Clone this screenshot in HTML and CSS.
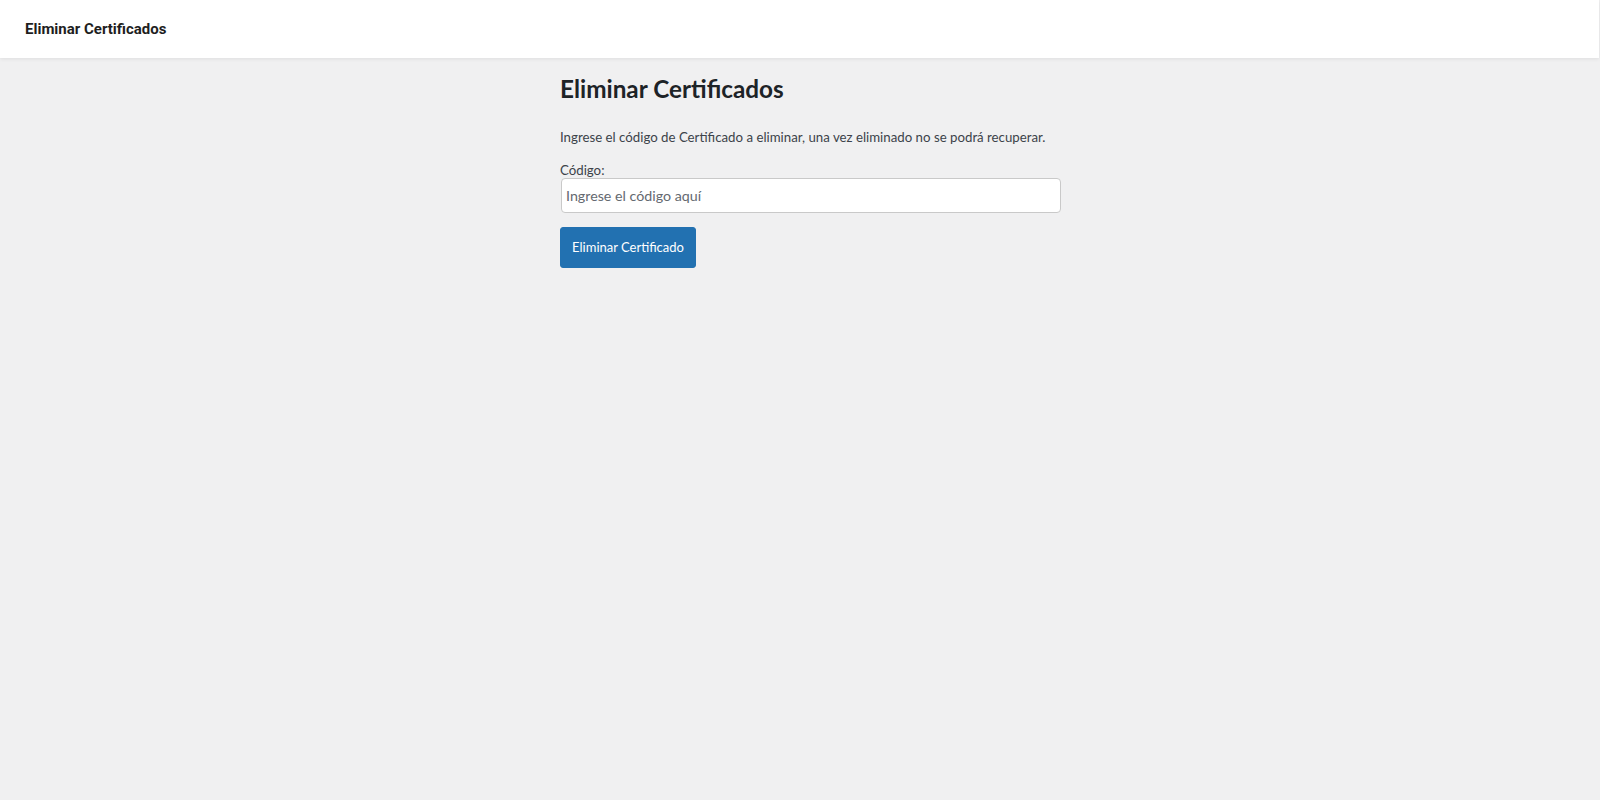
FILE: index.html
```html
<!DOCTYPE html>
<html lang="es">
<head>
<meta charset="utf-8">
<title>Eliminar Certificados</title>
<link rel="stylesheet" href="styles.css">
</head>
<body>
<header class="topbar">
  <div class="topbar-title">Eliminar Certificados</div>
</header>
<main class="wrap">
  <h1 class="page-title">Eliminar Certificados</h1>
  <p class="intro">Ingrese el código de Certificado a eliminar, una vez eliminado no se podrá recuperar.</p>
  <form class="form">
    <label class="label" for="codigo">Código:</label>
    <input class="input" id="codigo" type="text" placeholder="Ingrese el código aquí">
    <button class="button" type="button">Eliminar Certificado</button>
  </form>
</main>
</body>
</html>
```

FILE: styles.css
```css
html, body {
  margin: 0;
  padding: 0;
  background: #f0f0f1;
  height: 100%;
}
body {
  font-family: Lato, "Noto Sans", sans-serif;
  font-size: 13.25px;
  color: #3c434a;
}
.topbar {
  background: #fff;
  height: 58px;
  display: flex;
  align-items: center;
  padding-left: 25px;
  margin-right: 1px;
  box-shadow: 0 1px 4px rgba(0, 0, 0, 0.08);
}
.topbar-title {
  font-family: Roboto, "Liberation Sans", sans-serif;
  font-weight: 700;
  font-size: 15px;
  color: #1e1e1e;
}
.wrap {
  width: 480px;
  margin: 0 auto;
  padding-top: 16px;
}
.page-title {
  font-size: 24.3px;
  font-weight: 700;
  color: #1d2327;
  margin: 0;
  line-height: 30px;
  padding: 0;
}
.intro {
  margin: 24px 0 0;
  line-height: 1.5;
  white-space: nowrap;
}
.form {
  display: flex;
  flex-direction: column;
  align-items: flex-start;
  margin-top: 12px;
}
.label {
  margin-top: 2px;
  line-height: 16px;
  color: #3c434a;
}
.input {
  box-sizing: border-box;
  width: 500px;
  height: 35px;
  margin: 0 1px;
  padding: 0 4px;
  border: 1px solid #c9c9c9;
  border-radius: 4px;
  background: #fff;
  font-family: inherit;
  font-size: 14.25px;
  color: #2c3338;
  outline: none;
}
.input::placeholder {
  color: #646970;
}
.button {
  margin-top: 14px;
  box-sizing: border-box;
  width: 136px;
  height: 41px;
  background: #2271b1;
  border: 1px solid #2271b1;
  border-radius: 3px;
  color: #fff;
  font-family: inherit;
  font-size: 13px;
  padding: 0;
  white-space: nowrap;
  cursor: pointer;
}
```
